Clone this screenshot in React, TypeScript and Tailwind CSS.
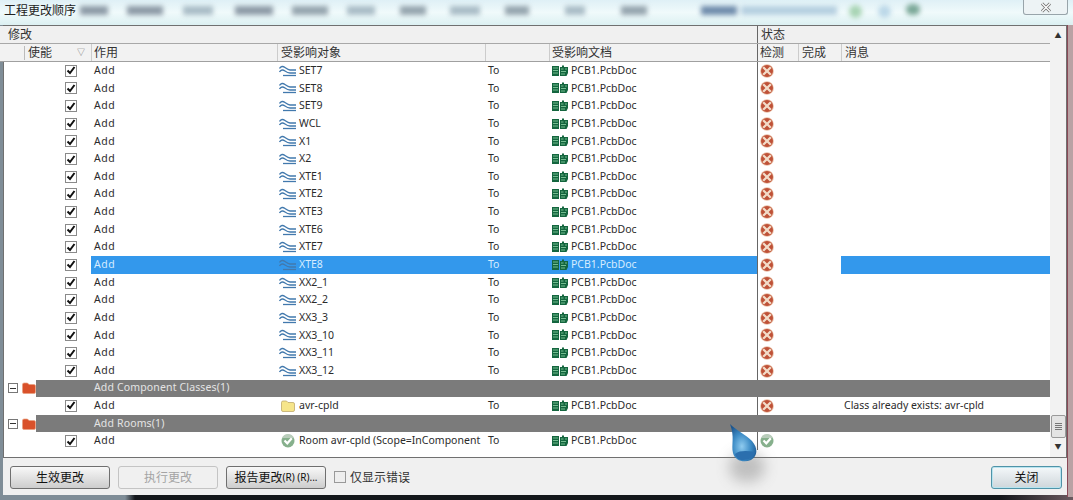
const nets = ["SET7", "SET8", "SET9", "WCL", "X1", "X2", "XTE1", "XTE2", "XTE3", "XTE6", "XTE7", "XTE8", "XX2_1", "XX2_2", "XX3_3", "XX3_10", "XX3_11", "XX3_12"]

// smeared window title showing through the glass: width, gap before, colour
const smears = [
  { w: 28, gap: 4, c: "#8c9aa6" },
  { w: 36, gap: 19, c: "#8c9aa6" },
  { w: 30, gap: 20, c: "#a9bcc6" },
  { w: 38, gap: 22, c: "#8c9aa6" },
  { w: 36, gap: 19, c: "#95a4ae" },
  { w: 28, gap: 19, c: "#a9bcc6" },
  { w: 26, gap: 25, c: "#95a4ae" },
  { w: 30, gap: 24, c: "#a9bcc6" },
  { w: 24, gap: 25, c: "#95a4ae" },
  { w: 20, gap: 36, c: "#a9bcc6" },
  { w: 26, gap: 36, c: "#95a4ae" },
  { w: 36, gap: 54, c: "#6f8bab" },
  { w: 96, gap: 4, c: "#b5cfe0" },
]

const gridCols = "grid grid-cols-[91px_186px_208px_64px_208px_41px_43px_209px]"

const NetIcon = () => (
  <svg width="17" height="12" viewBox="0 0 17 12" fill="none" stroke="#4279ad" strokeWidth="1.3" className="shrink-0">
    <path d="M0.500 3.500C2 1 4 1 6 2.500S9 5 11 5h6" />
    <path d="M0.500 7C2 4.500 4 4.500 6 6S9 8 11 8h6" />
    <path d="M4 10.500h13" />
  </svg>
)

const PcbIcon = () => (
  <svg width="16" height="12" viewBox="0 0 16 12" className="shrink-0">
    <path d="M0 1h7v10H0zM8 2h2V0.500h2V2h4v6l-1.500 3H8z" fill="#14663f" />
    <path d="M1 3h5M1 5.500h5M1 8h5M9 4h2.500M13 4h2M9 6.500h5M9 9h4" stroke="#7fc79a" strokeWidth="0.900" />
  </svg>
)

const ErrorIcon = () => (
  <svg width="14" height="14" viewBox="0 0 14 14" className="shrink-0">
    <circle cx="7" cy="7" r="6.800" fill="#e9bda4" />
    <circle cx="7" cy="7" r="6" fill="#bf5238" />
    <path d="M3.200 3.200l7.600 7.600M10.800 3.200l-7.600 7.600" stroke="#f3dcc8" strokeWidth="2.300" />
  </svg>
)

const CheckIcon = () => (
  <svg width="14" height="14" viewBox="0 0 14 14" className="shrink-0">
    <circle cx="7" cy="7" r="6.500" fill="#86b08c" />
    <path d="M1 4a6.500 6.500 0 0 1 12 0z" fill="#b9cdbb" />
    <path d="M3.500 6.500l2.800 2.800 4.500-5" stroke="#fff" strokeWidth="2.200" fill="none" />
  </svg>
)

const FolderIcon = ({ color, edge }: { color: string; edge: string }) => (
  <svg width="14" height="12" viewBox="0 0 14 12" className="shrink-0">
    <path d="M0.500 2.500Q0.500 1 2 1h3.500L7 2.500h5Q13.500 2.500 13.500 4v6Q13.500 11.500 12 11.500H2Q0.500 11.500 0.500 10Z" fill={color} stroke={edge} strokeWidth="0.700" />
  </svg>
)

const CheckBox = () => (
  <div className="flex h-[12px] w-[12px] items-center justify-center border border-[#8a8a8a] bg-white">
    <svg width="10" height="9" viewBox="0 0 10 9" fill="none" stroke="#111" strokeWidth="2">
      <path d="M1.500 4.500l2.500 2.500 4.500-6" />
    </svg>
  </div>
)

const Row = ({ icon, name, selected, message, status }: { icon: React.ReactNode; name: string; selected?: boolean; message?: string; status?: React.ReactNode }) => {
  const hl = selected ? "bg-[#3398ec] text-[#d6ecff]" : ""
  return (
    <div className={`${gridCols} h-[17.65px] items-stretch text-[10.5px] text-[#2b2b2b]`}>
      <div className="flex items-center pl-[65px]"><CheckBox /></div>
      <div className={`flex items-center pl-[3px] tracking-[0.6px] ${hl}`}>Add</div>
      <div className={`flex items-center gap-[3px] overflow-hidden whitespace-nowrap pl-[2px] ${hl}`}>
        <span className="flex w-[17px] shrink-0 justify-center">{icon}</span>
        {name}
      </div>
      <div className={`flex items-center pl-[3px] ${hl}`}>To</div>
      <div className={`flex items-center gap-[3px] pl-[3px] ${hl}`}>
        <PcbIcon />
        PCB1.PcbDoc
      </div>
      <div className="flex items-center border-l border-[#666] pl-[2px]">{status ?? <ErrorIcon />}</div>
      <div />
      <div className={`flex items-center pl-[3px] ${hl}`}>{message}</div>
    </div>
  )
}

const GroupRow = ({ label }: { label: string }) => (
  <div className="flex h-[17.65px] items-stretch">
    <div className="flex w-[36px] items-center gap-[4px] pl-[8px]">
      <div className="flex h-[10px] w-[10px] items-center justify-center border border-[#777] bg-white">
        <div className="h-px w-[6px] bg-[#333]" />
      </div>
      <FolderIcon color="#d9512a" edge="#e8a080" />
    </div>
    <div className="flex w-[1014px] items-center bg-[#7b7b7b] pl-[58px] text-[10.5px] tracking-[0.15px] text-[#e4e4e4]">{label}</div>
  </div>
)

const Btn = ({ children, disabled, primary, w }: { children: React.ReactNode; disabled?: boolean; primary?: boolean; w: string }) => (
  <div
    className={`flex h-[23px] items-center justify-center rounded-[3px] border text-[12px] ${w} ${
      disabled
        ? "border-[#c4c4c4] bg-[#f0f0f0] text-[#a4a4a4]"
        : primary
          ? "border-[#4f93a8] bg-gradient-to-b from-[#f4f8fa] to-[#cfd6da] text-[#111] shadow-[inset_0_0_0_1px_#b8e4ef]"
          : "border-[#6f6f6f] bg-gradient-to-b from-[#f8f8f8] to-[#cdcdcd] text-[#111]"
    }`}
  >
    {children}
  </div>
)

export default function App() {
  return (
    <div className="relative flex h-[500px] w-[1073px] flex-col overflow-hidden bg-[linear-gradient(to_right,#7f8d97_0,#7f8d97_125px,#14171b_135px,#14171b_1000px,#6a5a60_1073px)] font-['Noto_Sans','Noto_Sans_CJK_SC',sans-serif]">
      {/* glass title bar */}
      <div className="flex h-[25px] shrink-0 items-start bg-gradient-to-b from-[#dff0f6] via-[#f0fafb] to-[#dcf0f2] pl-[4px] pt-[1px]">
        <span className="w-[72px] shrink-0 text-[12px] leading-[20px] text-[#222]">工程更改顺序</span>
        <div className="mt-[5px] flex blur-[2.5px]">
          {smears.map((s, i) => (
            <div key={i} className="h-[9px] shrink-0" style={{ width: s.w, marginLeft: s.gap, backgroundColor: s.c }} />
          ))}
          <div className="ml-[12px] h-[13px] w-[13px] shrink-0 -translate-y-[1px] rounded-full bg-[#a8d4b4]" />
          <div className="ml-[16px] h-[13px] w-[13px] shrink-0 -translate-y-[1px] rounded-full bg-[#bcd8e8]" />
          <div className="ml-[15px] h-[11px] w-[14px] shrink-0 -translate-y-[2px] rounded-full bg-[#7ba898]" />
        </div>
        <div className="ml-auto mr-[5px] -mt-[1px] flex h-[15px] w-[45px] shrink-0 items-center justify-center rounded-b-[3px] border border-t-0 border-[#98a4aa] bg-[#edf3f5]">
          <svg width="12" height="11" viewBox="0 0 12 11" fill="none">
            <path d="M2 1.500l8 8M10 1.500l-8 8" stroke="#6f6f6f" strokeWidth="3" />
            <path d="M2 1.500l8 8M10 1.500l-8 8" stroke="#fff" strokeWidth="1.400" />
          </svg>
        </div>
      </div>
      <div className="flex min-h-0 flex-1 pb-[5px] pl-[3px] pr-[6px]">
        <div className="flex min-w-0 flex-1 flex-col bg-[#f0f0f0]">
          {/* table */}
          <div className="flex h-[433px] border border-[#707070] bg-white">
            <div className="-ml-[4px] w-[1050px] shrink-0">
              <div className="grid h-[18px] grid-cols-[757px_293px] border-b border-[#a8a8a8] bg-[#f0f0f0] text-[12px] leading-[17px] text-[#333]">
                <div className="pl-[8px]">修改</div>
                <div className="border-l border-[#666] pl-[3px]">状态</div>
              </div>
              <div className={`${gridCols} h-[18px] border-b border-[#a0a0a0] bg-[#f2f2f2] text-[12px] leading-[17px] text-[#333]`}>
                <div className="relative pl-[28px]">
                  <span className="absolute left-[24px] top-[2px] h-[14px] border-l border-[#bbb]" />
                  使能
                  <span className="absolute left-[77px] top-[-1px] text-[8px] text-[#777]">▽</span>
                </div>
                <div className="border-l border-[#ccc] pl-[2px]">作用</div>
                <div className="border-l border-[#ccc] pl-[3px]">受影响对象</div>
                <div className="border-l border-[#ccc]" />
                <div className="border-l border-[#ccc] pl-[2px]">受影响文档</div>
                <div className="border-l border-[#666] pl-[2px]">检测</div>
                <div className="border-l border-[#ccc] pl-[3px]">完成</div>
                <div className="border-l border-[#ccc] pl-[3px]">消息</div>
              </div>
              {nets.map((n) => (
                <Row key={n} icon={<NetIcon />} name={n} selected={n === "XTE8"} />
              ))}
              <GroupRow label="Add Component Classes(1)" />
              <Row icon={<FolderIcon color="#f6e58a" edge="#b8a060" />} name="avr-cpld" message="Class already exists: avr-cpld" />
              <GroupRow label="Add Rooms(1)" />
              <Row icon={<CheckIcon />} name="Room avr-cpld (Scope=InComponent" status={<CheckIcon />} />
            </div>
            {/* scrollbar */}
            <div className="flex flex-1 flex-col items-center bg-[#f2f2f2] pb-[7px] pt-[6px]">
              <span className="text-[7px] leading-none text-[#333]">▲</span>
              <div className="mt-auto flex h-[23px] w-[15px] flex-col items-center justify-center gap-px self-end rounded-[2px] border border-[#9a9a9a] bg-[#e4e4e4]">
                <div className="h-px w-[7px] bg-[#777]" />
                <div className="h-px w-[7px] bg-[#777]" />
                <div className="h-px w-[7px] bg-[#777]" />
                <div className="h-px w-[7px] bg-[#777]" />
              </div>
              <span className="mt-[5px] text-[7px] leading-none text-[#333]">▼</span>
            </div>
          </div>
          {/* footer */}
          <div className="flex flex-1 items-start gap-[8px] pl-[7px] pr-[5px] pt-[8px] text-[#333]">
            <Btn w="w-[100px]">生效更改</Btn>
            <Btn w="w-[100px]" disabled>执行更改</Btn>
            <Btn w="w-[100px]">
              报告更改<span className="text-[10px]">(R) (R)...</span>
            </Btn>
            <div className="mt-[5px] h-[12px] w-[12px] border border-[#999] bg-[#eee]" />
            <span className="-ml-[4px] text-[12px] leading-[23px]">仅显示错误</span>
            <div className="ml-auto">
              <Btn w="w-[71px]" primary>关闭</Btn>
            </div>
          </div>
        </div>
      </div>
      {/* right window border */}
      <div className="absolute bottom-[3px] right-0 top-[25px] w-[6px] border-l border-[#8a4a58] bg-[#b9a2a4]" />
      {/* cursor drop and its shadow */}
      <div className="absolute left-[729px] top-[452px] h-[30px] w-[36px] rounded-full bg-[#777] opacity-40 blur-[7px]" />
      <svg className="absolute left-[725px] top-[421px]" width="36" height="44" viewBox="0 0 36 44">
        <defs>
          <radialGradient id="drop" cx="45%" cy="60%" r="62%">
            <stop offset="0%" stopColor="#8fcbef" />
            <stop offset="55%" stopColor="#3d8cc6" />
            <stop offset="100%" stopColor="#1c568f" />
          </radialGradient>
        </defs>
        <path d="M5 3C11 9 20 13 27 20 33 27 33 35 26 39 19 42 10 40 8 32 6 24 10 16 5 3Z" fill="url(#drop)" />
        <path d="M10 33C15 29 23 30 30 31 29 36 24 39 18 39 14 39 11 37 10 33Z" fill="#2b6fae" />
      </svg>
    </div>
  )
}
